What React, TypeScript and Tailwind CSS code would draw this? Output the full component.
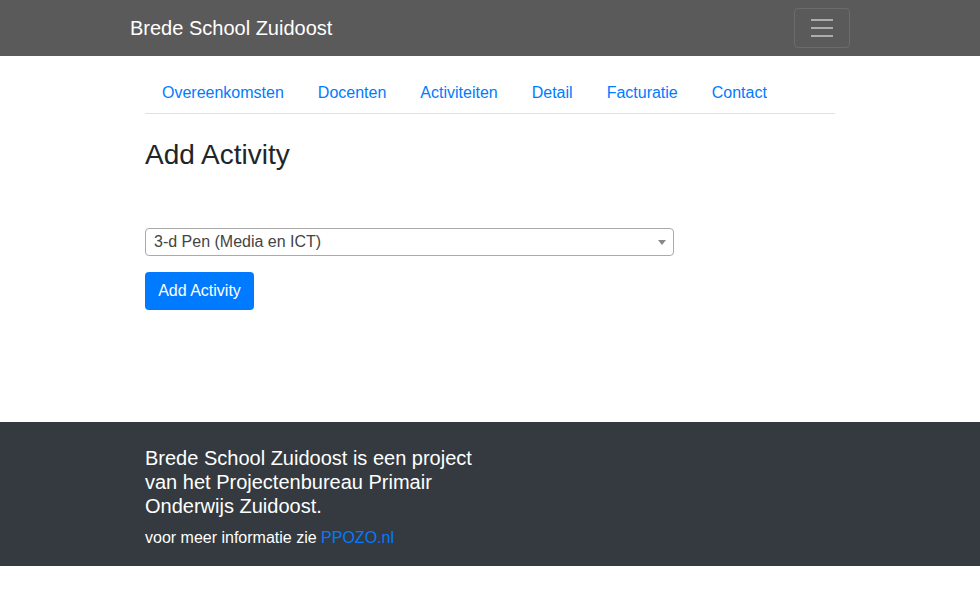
const navItems = ['Overeenkomsten', 'Docenten', 'Activiteiten', 'Detail', 'Facturatie', 'Contact']

function Toggler() {
  return (
    <button className="w-[56px] h-[40px] border border-white/10 rounded flex items-center justify-center">
      <svg width="30" height="30" viewBox="0 0 30 30">
        <path
          stroke="rgba(255,255,255,0.5)"
          strokeWidth="2"
          strokeMiterlimit="10"
          d="M4 7h22M4 15h22M4 23h22"
        />
      </svg>
    </button>
  )
}

export default function App() {
  return (
    <div className="min-h-screen bg-white font-['Liberation_Sans',Arial,sans-serif] text-[#212529]">
      {/* Navbar */}
      <header className="bg-[#5a5a5a] h-14">
        <div className="w-[720px] mx-auto h-full flex items-center justify-between">
          <span className="text-white text-[20px] leading-[30px]">Brede School Zuidoost</span>
          <Toggler />
        </div>
      </header>

      {/* Main */}
      <main className="w-[720px] mx-auto px-[15px] pt-[17px] pb-[112px]">
        <nav className="flex border-b border-[#dee2e6]">
          {navItems.map((item) => (
            <a key={item} className="px-[17px] py-2 text-[16px] leading-6 text-[#007bff] cursor-pointer">
              {item}
            </a>
          ))}
        </nav>

        <h2 className="mt-[24px] text-[28px] leading-[34px] font-normal">Add Activity</h2>

        <div className="mt-[56px] w-[529px] h-[28px] border border-[#aaa] rounded flex items-center justify-between pl-2 pr-[7px]">
          <span className="text-[16px] text-[#444] leading-[26px]">3-d Pen (Media en ICT)</span>
          <svg width="8" height="5" viewBox="0 0 8 5">
            <path d="M0 0h8L4 5z" fill="#888" />
          </svg>
        </div>

        <button className="mt-4 bg-[#007bff] text-white text-[16px] leading-6 px-[13px] py-[7px] rounded w-[109px] h-[38px]">
          Add Activity
        </button>
      </main>

      {/* Footer */}
      <footer className="bg-[#343a40] text-white">
        <div className="w-[720px] mx-auto px-[15px] pt-[24px] pb-[16px]">
          <div className="w-[330px]">
            <h5 className="text-[20px] leading-6 mb-[8px]">
              Brede School Zuidoost is een project van het Projectenbureau Primair Onderwijs Zuidoost.
            </h5>
            <p className="text-[16px] leading-6">
              voor meer informatie zie <a className="text-[#007bff]">PPOZO.nl</a>
            </p>
          </div>
        </div>
      </footer>
    </div>
  )
}
